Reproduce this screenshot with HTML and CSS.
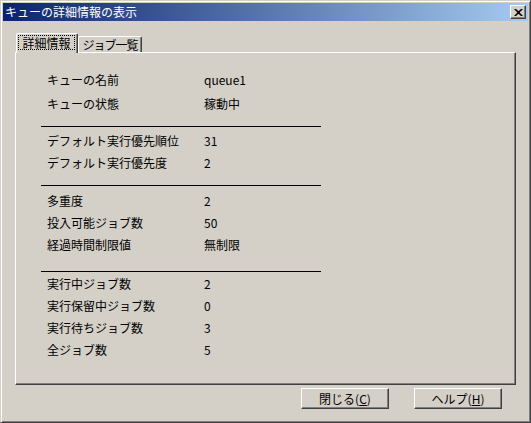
FILE: index.html
```html
<!DOCTYPE html>
<html lang="ja">
<head>
<meta charset="utf-8">
<title>キューの詳細情報の表示</title>
<link rel="stylesheet" href="styles.css">
</head>
<body>
<div class="window">
  <div class="titlebar">
    <span class="title">キューの詳細情報の表示</span>
    <span class="close"><svg width="9" height="7" viewBox="0 0 9 7"><path d="M0 0h2l2.5 2.3L7 0h2L5.6 3.5 9 7H7L4.5 4.7 2 7H0l3.4-3.5z" fill="#000"/></svg></span>
  </div>
  <div class="body">
    <div class="tabs">
      <div class="tab active"><span class="focus">詳細情報</span></div>
      <div class="tab inactive">ジョブ一覧</div>
    </div>
    <div class="panel">
      <div class="group g1">
        <div class="row"><span>キューの名前</span><span>queue1</span></div>
        <div class="row"><span>キューの状態</span><span>稼動中</span></div>
      </div>
      <div class="sep"></div>
      <div class="group g2">
        <div class="row"><span>デフォルト実行優先順位</span><span>31</span></div>
        <div class="row"><span>デフォルト実行優先度</span><span>2</span></div>
      </div>
      <div class="sep"></div>
      <div class="group g3">
        <div class="row"><span>多重度</span><span>2</span></div>
        <div class="row"><span>投入可能ジョブ数</span><span>50</span></div>
        <div class="row"><span>経過時間制限値</span><span>無制限</span></div>
      </div>
      <div class="sep wide"></div>
      <div class="group g4">
        <div class="row"><span>実行中ジョブ数</span><span>2</span></div>
        <div class="row"><span>実行保留中ジョブ数</span><span>0</span></div>
        <div class="row"><span>実行待ちジョブ数</span><span>3</span></div>
        <div class="row"><span>全ジョブ数</span><span>5</span></div>
      </div>
    </div>
    <div class="buttons">
      <button class="btn">閉じる(<u>C</u>)</button>
      <button class="btn">ヘルプ(<u>H</u>)</button>
    </div>
  </div>
</div>
</body>
</html>
```
FILE: styles.css
```css
* {
  box-sizing: border-box;
  margin: 0;
  padding: 0;
}

html, body {
  background: #d4d0c8;
}

body {
  width: 531px;
  height: 423px;
  overflow: hidden;
  font-family: "Noto Sans CJK JP", "Liberation Sans", sans-serif;
  font-size: 12px;
  color: #000;
}

.window {
  width: 531px;
  height: 423px;
  border: 1px solid;
  border-color: #d4d0c8 #404040 #404040 #d4d0c8;
  box-shadow: inset 1px 1px #fff, inset -1px -1px #808080;
  padding: 2px;
  display: flex;
  flex-direction: column;
}

.titlebar {
  height: 18px;
  flex: none;
  background: linear-gradient(to right, #0a246a, #a6caf0);
  display: flex;
  align-items: center;
  justify-content: space-between;
  padding: 0 2px 0 2px;
  color: #fff;
}

.title {
  line-height: 18px;
  white-space: nowrap;
}

.close {
  width: 16px;
  height: 14px;
  background: #d4d0c8;
  border: 1px solid;
  border-color: #fff #404040 #404040 #fff;
  box-shadow: inset -1px -1px #808080;
  display: flex;
  align-items: center;
  justify-content: center;
}

.close svg {
  display: block;
}

.body {
  flex: 1;
  padding: 12px 12px 0 12px;
  display: flex;
  flex-direction: column;
}

.tabs {
  display: flex;
  align-items: flex-end;
  height: 20px;
  margin-left: 1px;
  margin-bottom: -1px;
  position: relative;
  z-index: 1;
}

.tab {
  background: #d4d0c8;
  border-top: 1px solid #fff;
  border-left: 1px solid #fff;
  border-right: 1px solid #404040;
  box-shadow: inset -1px 0 #808080;
  border-radius: 2px 2px 0 0;
  white-space: nowrap;
}

.tab.active {
  width: 62px;
  height: 20px;
  padding-top: 1px;
}

.focus {
  display: block;
  width: 57px;
  height: 15px;
  margin-left: 1px;
  border: 1px dotted #000;
  line-height: 13px;
  text-align: center;
}

.tab.inactive {
  width: 64px;
  height: 16px;
  margin-bottom: 1px;
  line-height: 15px;
  text-align: center;
  letter-spacing: -1px;
}

.panel {
  height: 333px;
  flex: none;
  border: 1px solid;
  border-color: #fff #404040 #404040 #fff;
  box-shadow: inset -1px -1px #808080;
  padding: 16px 0 0 25px;
}

.group {
  display: flex;
  flex-direction: column;
}

.g1 { gap: 2px; }
.g2 { margin-top: 3px; }
.g3 { margin-top: 4px; }
.g4 { margin-top: 1px; }

.row {
  display: grid;
  grid-template-columns: 157px auto;
  height: 22px;
  line-height: 22px;
  padding-left: 6px;
  white-space: nowrap;
}

.sep {
  width: 280px;
  height: 1px;
  background: #000;
  margin-top: 11px;
}

.sep.wide {
  margin-top: 15px;
}

.buttons {
  display: flex;
  justify-content: flex-end;
  gap: 25px;
  margin-top: 3px;
  padding-right: 14px;
}

.btn {
  width: 88px;
  height: 21px;
  background: #d4d0c8;
  border: 1px solid;
  border-color: #fff #404040 #404040 #fff;
  box-shadow: inset -1px -1px #808080;
  font-family: inherit;
  font-size: 12px;
  line-height: 19px;
  color: #000;
  text-align: center;
}

.btn u {
  text-decoration: underline;
}
```
